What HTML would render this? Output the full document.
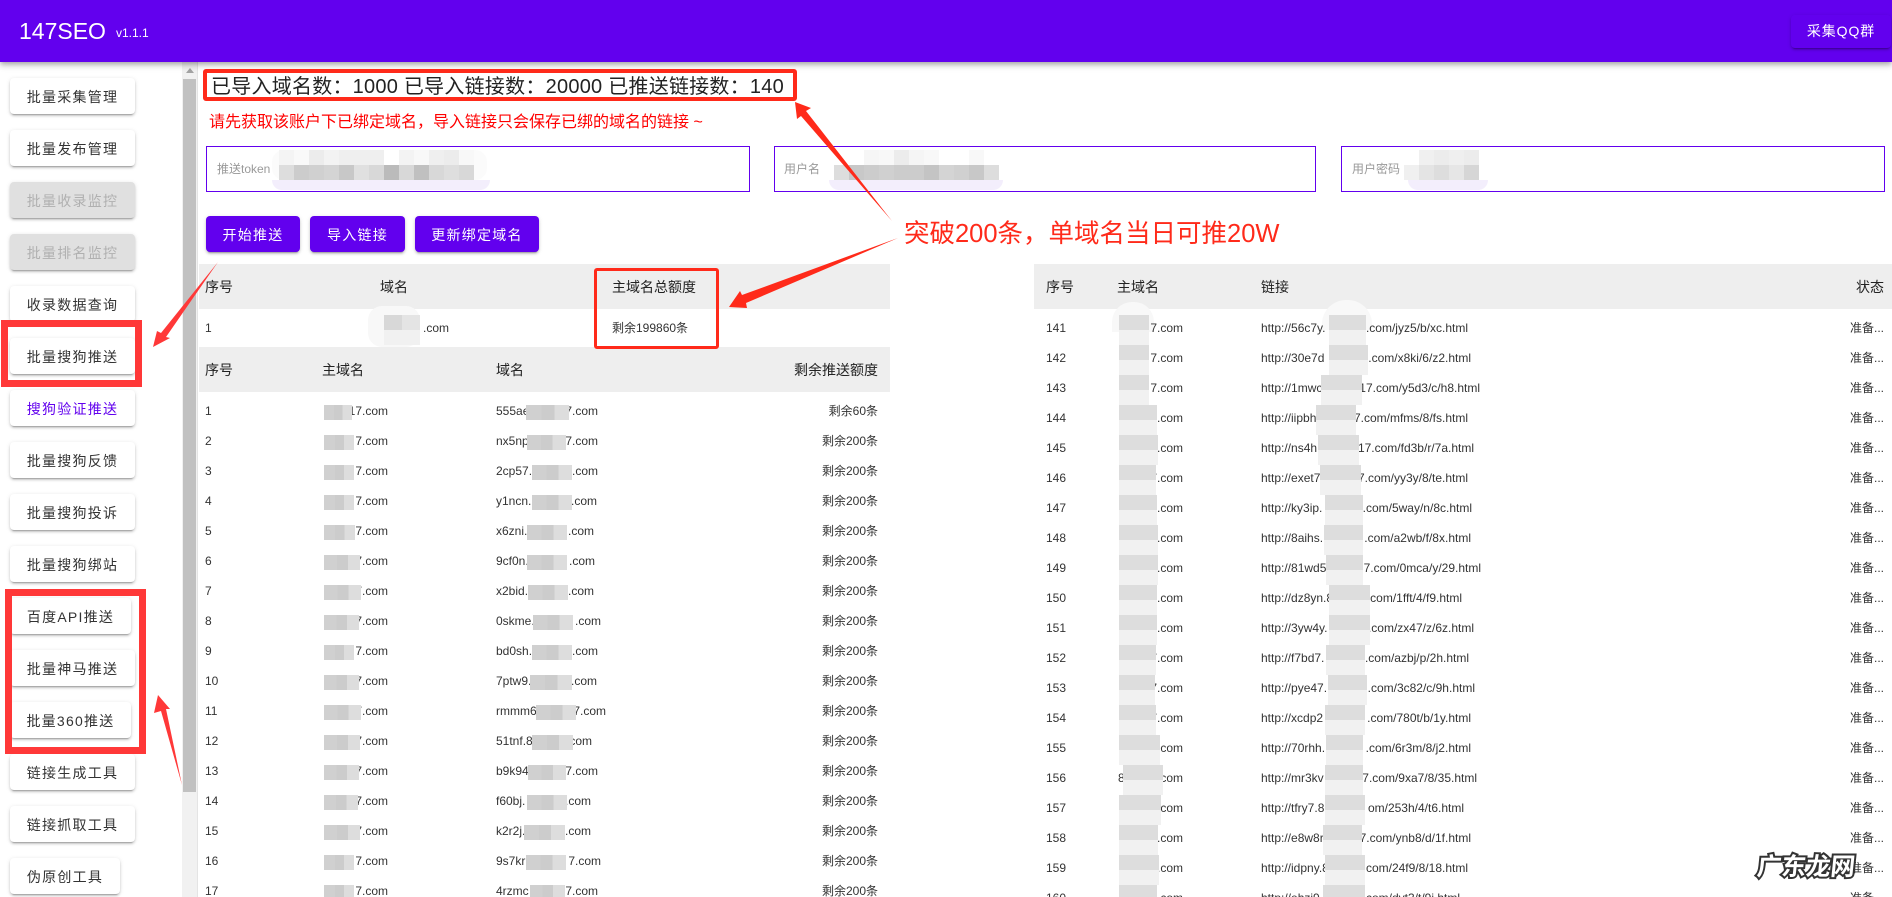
<!DOCTYPE html>
<html lang="zh-CN">
<head>
<meta charset="utf-8">
<title>147SEO</title>
<style>
html,body{margin:0;padding:0;background:#fff;width:1892px;height:897px;overflow:hidden}
body{position:relative;font-family:"Liberation Sans","Noto Sans CJK SC",sans-serif;color:#333}
.abs{position:absolute}
#top{position:absolute;left:0;top:0;width:1892px;height:62px;background:#6200ee;box-shadow:0 2px 4px -1px rgba(0,0,0,.2),0 4px 5px 0 rgba(0,0,0,.14),0 1px 10px 0 rgba(0,0,0,.12);z-index:5;color:#fff}
#top .t{position:absolute;left:19px;top:16px;font-size:23px;line-height:30px;white-space:nowrap}
#top .v{position:absolute;left:116px;top:25px;font-size:12px;line-height:16px}
#top .q{position:absolute;left:1791px;top:15px;width:100px;height:33px;line-height:33px;text-align:center;font-size:14px;letter-spacing:.9px;box-shadow:0 3px 1px -2px rgba(0,0,0,.2),0 2px 2px 0 rgba(0,0,0,.14),0 1px 5px 0 rgba(0,0,0,.12);border-radius:4px}
.sb{position:absolute;left:10px;width:125px;height:36px;line-height:38px;background:#fff;border-radius:4px;text-align:center;font-size:14px;letter-spacing:1.25px;color:#333;white-space:nowrap;box-shadow:0 3px 1px -2px rgba(0,0,0,.2),0 2px 2px 0 rgba(0,0,0,.14),0 1px 5px 0 rgba(0,0,0,.12)}
.sb.dis{background:#e0e0e0;color:#b0b0b0}
.sb.pur{color:#6200ee}
.pb{position:absolute;top:216px;height:36px;line-height:38px;background:#6200ee;color:#fff;border-radius:4px;text-align:center;font-size:14px;letter-spacing:1.25px;box-shadow:0 3px 1px -2px rgba(0,0,0,.2),0 2px 2px 0 rgba(0,0,0,.14),0 1px 5px 0 rgba(0,0,0,.12)}
.inp{position:absolute;top:146px;height:44px;border:1px solid #6200ee;background:#fff}
.lab{position:absolute;top:160px;font-size:12px;line-height:18px;color:#999;white-space:nowrap}
.mos{position:absolute;display:flex}
.mos i{display:block;width:15px;height:15px;flex:none}
.lav{position:absolute;top:180px;height:10px;background:#f3eefc;border-radius:0 0 10px 10px}
.hd{position:absolute;height:45px;background:#eee}
.th{position:absolute;font-size:14px;line-height:47px;color:#222;white-space:nowrap}
.row{position:absolute;left:0;width:1892px;height:30px;line-height:30px;font-size:12px;color:#333}
.row span{position:absolute;top:0;white-space:nowrap}
.a{left:205px}.b{right:1504px}.c{left:496px}.z{right:1014px}
.n{left:1046px}.p{right:709px}.h{left:1261px}.s{right:8px}
.m{position:absolute;top:9px;height:15px;background:linear-gradient(90deg,#d0d0d0 0 36%,#ccc 36% 66%,#ddd 66%)}
.d{position:absolute;top:2px;height:30px;background:linear-gradient(180deg,#ddd 0 50%,#f1f1f1 50%)}
.box{position:absolute;box-sizing:border-box}
</style>
</head>
<body>
<div id="top">
  <div class="t">147SEO</div><div class="v">v1.1.1</div>
  <div class="q">采集QQ群</div>
</div>

<!-- sidebar -->
<div class="sb" style="top:78px">批量采集管理</div>
<div class="sb" style="top:130px">批量发布管理</div>
<div class="sb dis" style="top:182px">批量收录监控</div>
<div class="sb dis" style="top:234px">批量排名监控</div>
<div class="sb" style="top:286px">收录数据查询</div>
<div class="sb" style="top:338px">批量搜狗推送</div>
<div class="sb pur" style="top:390px">搜狗验证推送</div>
<div class="sb" style="top:442px">批量搜狗反馈</div>
<div class="sb" style="top:494px">批量搜狗投诉</div>
<div class="sb" style="top:546px">批量搜狗绑站</div>
<div class="sb" style="top:598px;width:121px">百度API推送</div>
<div class="sb" style="top:650px">批量神马推送</div>
<div class="sb" style="top:702px;width:121px">批量360推送</div>
<div class="sb" style="top:754px">链接生成工具</div>
<div class="sb" style="top:806px">链接抓取工具</div>
<div class="sb" style="top:858px;width:110px">伪原创工具</div>

<!-- scrollbar -->
<div class="abs" style="left:182px;top:62px;width:16px;height:835px;background:#f1f1f1;border-right:1px solid #e4e4e4;box-sizing:border-box"></div>
<div class="abs" style="left:183px;top:79px;width:13px;height:713px;background:#c1c1c1"></div>
<div class="abs" style="left:186px;top:68px;width:0;height:0;border-left:4px solid transparent;border-right:4px solid transparent;border-bottom:5px solid #a3a3a3"></div>

<!-- stats -->
<div class="abs" style="left:211px;top:73px;font-size:20px;line-height:28px;letter-spacing:.24px;color:#222;white-space:nowrap">已导入域名数：1000 已导入链接数：20000 已推送链接数：140</div>
<div class="abs" style="left:209px;top:112px;font-size:16px;line-height:22px;color:#f00;white-space:nowrap">请先获取该账户下已绑定域名，导入链接只会保存已绑的域名的链接 ~</div>

<!-- inputs -->
<div class="inp" style="left:206px;width:542px"></div>
<div class="inp" style="left:774px;width:540px"></div>
<div class="inp" style="left:1341px;width:542px"></div>
<div class="lab" style="left:217px">推送token</div>
<div class="lab" style="left:784px">用户名</div>
<div class="lab" style="left:1352px">用户密码</div>

<div class="abs" style="left:272px;top:150px;width:215px;height:30px;background:#fbfbfb;border-radius:12px"></div>
<div class="lav" style="left:272px;width:218px"></div>
<div class="mos" style="left:279px;top:150px"><i style="background:#f4f4f4"></i><i style="background:#f9f9f9"></i><i style="background:#ececec"></i><i style="background:#f3f3f3"></i><i style="background:#efefef"></i><i style="background:#efefef"></i><i style="background:#efefef"></i><i style="background:#fff"></i><i style="background:#f3f3f3"></i><i style="background:#f8f8f8"></i><i style="background:#efefef"></i><i style="background:#ececec"></i><i style="background:#f8f8f8"></i></div>
<div class="mos" style="left:279px;top:165px"><i style="background:#ddd"></i><i style="background:#ccc"></i><i style="background:#d0d0d0"></i><i style="background:#d4d4d4"></i><i style="background:#c8c8c8"></i><i style="background:#e0e0e0"></i><i style="background:#d8d8d8"></i><i style="background:#bbb"></i><i style="background:#d8d8d8"></i><i style="background:#c0c0c0"></i><i style="background:#d8d8d8"></i><i style="background:#dedede"></i><i style="background:#d8d8d8"></i></div>

<div class="lav" style="left:829px;width:174px"></div>
<div class="mos" style="left:834px;top:150px"><i></i><i></i><i style="background:#f6f6f6"></i><i style="background:#f8f8f8"></i><i style="background:#ececec"></i><i style="background:#f5f5f5"></i><i style="background:#f8f8f8"></i><i></i><i></i><i style="background:#f8f8f8"></i><i></i></div>
<div class="mos" style="left:834px;top:165px"><i style="background:#ddd"></i><i style="background:#c8c8c8"></i><i style="background:#ccc"></i><i style="background:#d0d0d0"></i><i style="background:#ccc"></i><i style="background:#ccc"></i><i style="background:#c4c4c4"></i><i style="background:#d4d4d4"></i><i style="background:#d0d0d0"></i><i style="background:#c8c8c8"></i><i style="background:#ddd"></i></div>

<div class="lav" style="left:1408px;width:80px"></div>
<div class="mos" style="left:1404px;top:150px"><i></i><i style="background:#f0f0f0"></i><i style="background:#ececec"></i><i style="background:#efefef"></i><i style="background:#ececec"></i></div>
<div class="mos" style="left:1404px;top:165px"><i style="background:#f0f0f0"></i><i style="background:#e4e4e4"></i><i style="background:#ddd"></i><i style="background:#e6e6e6"></i><i style="background:#d6d6d6"></i></div>

<!-- push buttons -->
<div class="pb" style="left:206px;width:94px">开始推送</div>
<div class="pb" style="left:310px;width:95px">导入链接</div>
<div class="pb" style="left:415px;width:124px">更新绑定域名</div>

<!-- table 1 -->
<div class="hd" style="left:199px;top:264px;width:691px"></div>
<div class="th" style="left:205px;top:264px">序号</div>
<div class="th" style="left:380px;top:264px">域名</div>
<div class="th" style="left:612px;top:264px">主域名总额度</div>
<div class="row" style="top:313px">
  <span class="a">1</span><span style="left:423px">.com</span><span style="left:612px">剩余199860条</span>
</div>
<div class="abs" style="left:368px;top:306px;width:52px;height:41px;background:#f8f8f8;border-radius:14px"></div>
<div class="abs" style="left:384px;top:315px;width:36px;height:15px;background:linear-gradient(90deg,#d8d8d8 50%,#e4e4e4 50%)"></div>
<div class="abs" style="left:384px;top:330px;width:36px;height:15px;background:#f1f1f1"></div>

<!-- table 2 -->
<div class="hd" style="left:199px;top:347px;width:691px"></div>
<div class="th" style="left:205px;top:347px">序号</div>
<div class="th" style="left:322px;top:347px">主域名</div>
<div class="th" style="left:496px;top:347px">域名</div>
<div class="th" style="right:1014px;top:347px">剩余推送额度</div>

<div class="row" style="top:396px"><span class="a">1</span><span class="b">17.com</span><span class="c">555ae</span><span style="right:1294px">7.com</span><span class="z">剩余60条</span><div class="m" style="left:324px;width:28px"></div><div class="m" style="left:526px;width:43px"></div></div>
<div class="row" style="top:426px"><span class="a">2</span><span class="b">7.com</span><span class="c">nx5np</span><span style="right:1294px">7.com</span><span class="z">剩余200条</span><div class="m" style="left:324px;width:30px"></div><div class="m" style="left:527px;width:39px"></div></div>
<div class="row" style="top:456px"><span class="a">3</span><span class="b">7.com</span><span class="c">2cp57.</span><span style="right:1294px">.com</span><span class="z">剩余200条</span><div class="m" style="left:324px;width:30px"></div><div class="m" style="left:532px;width:40px"></div></div>
<div class="row" style="top:486px"><span class="a">4</span><span class="b">7.com</span><span class="c">y1ncn.</span><span style="right:1295px">.com</span><span class="z">剩余200条</span><div class="m" style="left:324px;width:30px"></div><div class="m" style="left:532px;width:40px"></div></div>
<div class="row" style="top:516px"><span class="a">5</span><span class="b">7.com</span><span class="c">x6zni.</span><span style="right:1298px">.com</span><span class="z">剩余200条</span><div class="m" style="left:324px;width:31px"></div><div class="m" style="left:527px;width:40px"></div></div>
<div class="row" style="top:546px"><span class="a">6</span><span class="b">7.com</span><span class="c">9cf0n.</span><span style="right:1297px">.com</span><span class="z">剩余200条</span><div class="m" style="left:324px;width:36px"></div><div class="m" style="left:527px;width:40px"></div></div>
<div class="row" style="top:576px"><span class="a">7</span><span class="b">7.com</span><span class="c">x2bid.</span><span style="right:1298px">.com</span><span class="z">剩余200条</span><div class="m" style="left:324px;width:37px"></div><div class="m" style="left:528px;width:40px"></div></div>
<div class="row" style="top:606px"><span class="a">8</span><span class="b">7.com</span><span class="c">0skme.</span><span style="right:1291px">.com</span><span class="z">剩余200条</span><div class="m" style="left:324px;width:35px"></div><div class="m" style="left:533px;width:40px"></div></div>
<div class="row" style="top:636px"><span class="a">9</span><span class="b">7.com</span><span class="c">bd0sh.</span><span style="right:1294px">.com</span><span class="z">剩余200条</span><div class="m" style="left:324px;width:30px"></div><div class="m" style="left:532px;width:40px"></div></div>
<div class="row" style="top:666px"><span class="a">10</span><span class="b">7.com</span><span class="c">7ptw9.</span><span style="right:1295px">.com</span><span class="z">剩余200条</span><div class="m" style="left:324px;width:35px"></div><div class="m" style="left:530px;width:42px"></div></div>
<div class="row" style="top:696px"><span class="a">11</span><span class="b">7.com</span><span class="c">rmmm6</span><span style="right:1286px">7.com</span><span class="z">剩余200条</span><div class="m" style="left:324px;width:37px"></div><div class="m" style="left:536px;width:40px"></div></div>
<div class="row" style="top:726px"><span class="a">12</span><span class="b">7.com</span><span class="c">51tnf.8</span><span style="right:1300px">.com</span><span class="z">剩余200条</span><div class="m" style="left:324px;width:36px"></div><div class="m" style="left:532px;width:41px"></div></div>
<div class="row" style="top:756px"><span class="a">13</span><span class="b">7.com</span><span class="c">b9k94</span><span style="right:1294px">7.com</span><span class="z">剩余200条</span><div class="m" style="left:324px;width:35px"></div><div class="m" style="left:528px;width:38px"></div></div>
<div class="row" style="top:786px"><span class="a">14</span><span class="b">7.com</span><span class="c">f60bj.</span><span style="right:1301px">.com</span><span class="z">剩余200条</span><div class="m" style="left:324px;width:34px"></div><div class="m" style="left:527px;width:40px"></div></div>
<div class="row" style="top:816px"><span class="a">15</span><span class="b">7.com</span><span class="c">k2r2j.</span><span style="right:1301px">.com</span><span class="z">剩余200条</span><div class="m" style="left:324px;width:36px"></div><div class="m" style="left:524px;width:41px"></div></div>
<div class="row" style="top:846px"><span class="a">16</span><span class="b">7.com</span><span class="c">9s7kr</span><span style="right:1291px">7.com</span><span class="z">剩余200条</span><div class="m" style="left:324px;width:30px"></div><div class="m" style="left:526px;width:40px"></div></div>
<div class="row" style="top:876px"><span class="a">17</span><span class="b">7.com</span><span class="c">4rzmc</span><span style="right:1294px">7.com</span><span class="z">剩余200条</span><div class="m" style="left:324px;width:30px"></div><div class="m" style="left:530px;width:35px"></div></div>

<!-- right table -->
<div class="hd" style="left:1034px;top:264px;width:858px"></div>
<div class="th" style="left:1046px;top:264px">序号</div>
<div class="th" style="left:1117px;top:264px">主域名</div>
<div class="th" style="left:1261px;top:264px">链接</div>
<div class="th" style="right:8px;top:264px">状态</div>
<div class="abs" style="left:1112px;top:302px;width:42px;height:30px;background:#f8f8f8;border-radius:20px 20px 0 0"></div>
<div class="abs" style="left:1322px;top:300px;width:50px;height:30px;background:#f8f8f8;border-radius:24px 24px 0 0"></div>

<div class="row" style="top:313px"><span class="n">141</span><span class="p">7.com</span><span class="h">http://56c7y.</span><span style="right:424px">.com/jyz5/b/xc.html</span><span class="s">准备...</span><div class="d" style="left:1119px;width:30px"></div><div class="d" style="left:1329px;width:37px"></div></div>
<div class="row" style="top:343px"><span class="n">142</span><span class="p">7.com</span><span class="h">http://30e7d</span><span style="right:421px">.com/x8ki/6/z2.html</span><span class="s">准备...</span><div class="d" style="left:1119px;width:30px"></div><div class="d" style="left:1329px;width:39px"></div></div>
<div class="row" style="top:373px"><span class="n">143</span><span class="p">7.com</span><span class="h">http://1mwc</span><span style="right:412px">17.com/y5d3/c/h8.html</span><span class="s">准备...</span><div class="d" style="left:1119px;width:30px"></div><div class="d" style="left:1321px;width:41px"></div></div>
<div class="row" style="top:403px"><span class="n">144</span><span class="p">7.com</span><span class="h">http://iipbh</span><span style="right:424px">7.com/mfms/8/fs.html</span><span class="s">准备...</span><div class="d" style="left:1119px;width:38px"></div><div class="d" style="left:1316px;width:40px"></div></div>
<div class="row" style="top:433px"><span class="n">145</span><span class="p">7.com</span><span class="h">http://ns4h</span><span style="right:418px">17.com/fd3b/r/7a.html</span><span class="s">准备...</span><div class="d" style="left:1119px;width:39px"></div><div class="d" style="left:1318px;width:41px"></div></div>
<div class="row" style="top:463px"><span class="n">146</span><span class="p">7.com</span><span class="h">http://exet7</span><span style="right:424px">7.com/yy3y/8/te.html</span><span class="s">准备...</span><div class="d" style="left:1119px;width:37px"></div><div class="d" style="left:1320px;width:41px"></div></div>
<div class="row" style="top:493px"><span class="n">147</span><span class="p">7.com</span><span class="h">http://ky3ip.</span><span style="right:420px">.com/5way/n/8c.html</span><span class="s">准备...</span><div class="d" style="left:1119px;width:38px"></div><div class="d" style="left:1325px;width:38px"></div></div>
<div class="row" style="top:523px"><span class="n">148</span><span class="p">7.com</span><span class="h">http://8aihs.</span><span style="right:421px">.com/a2wb/f/8x.html</span><span class="s">准备...</span><div class="d" style="left:1119px;width:39px"></div><div class="d" style="left:1324px;width:39px"></div></div>
<div class="row" style="top:553px"><span class="n">149</span><span class="p">7.com</span><span class="h">http://81wd5</span><span style="right:411px">7.com/0mca/y/29.html</span><span class="s">准备...</span><div class="d" style="left:1119px;width:39px"></div><div class="d" style="left:1326px;width:37px"></div></div>
<div class="row" style="top:583px"><span class="n">150</span><span class="p">7.com</span><span class="h">http://dz8yn.8</span><span style="right:430px">.com/1fft/4/f9.html</span><span class="s">准备...</span><div class="d" style="left:1119px;width:38px"></div><div class="d" style="left:1329px;width:41px"></div></div>
<div class="row" style="top:613px"><span class="n">151</span><span class="p">7.com</span><span class="h">http://3yw4y.</span><span style="right:418px">.com/zx47/z/6z.html</span><span class="s">准备...</span><div class="d" style="left:1119px;width:38px"></div><div class="d" style="left:1329px;width:41px"></div></div>
<div class="row" style="top:643px"><span class="n">152</span><span class="p">7.com</span><span class="h">http://f7bd7.</span><span style="right:423px">.com/azbj/p/2h.html</span><span class="s">准备...</span><div class="d" style="left:1119px;width:37px"></div><div class="d" style="left:1326px;width:39px"></div></div>
<div class="row" style="top:673px"><span class="n">153</span><span class="p">7.com</span><span class="h">http://pye47.</span><span style="right:417px">.com/3c82/c/9h.html</span><span class="s">准备...</span><div class="d" style="left:1119px;width:36px"></div><div class="d" style="left:1328px;width:39px"></div></div>
<div class="row" style="top:703px"><span class="n">154</span><span class="p">7.com</span><span class="h">http://xcdp2</span><span style="right:421px">.com/780t/b/1y.html</span><span class="s">准备...</span><div class="d" style="left:1119px;width:37px"></div><div class="d" style="left:1325px;width:40px"></div></div>
<div class="row" style="top:733px"><span class="n">155</span><span class="p">7.com</span><span class="h">http://70rhh.</span><span style="right:421px">.com/6r3m/8/j2.html</span><span class="s">准备...</span><div class="d" style="left:1119px;width:41px"></div><div class="d" style="left:1326px;width:37px"></div></div>
<div class="row" style="top:763px"><span class="n">156</span><span style="left:1118px">8</span><span class="p">7.com</span><span class="h">http://mr3kv</span><span style="right:415px">7.com/9xa7/8/35.html</span><span class="s">准备...</span><div class="d" style="left:1123px;width:40px"></div><div class="d" style="left:1325px;width:38px"></div></div>
<div class="row" style="top:793px"><span class="n">157</span><span class="p">7.com</span><span class="h">http://tfry7.8</span><span style="right:428px">om/253h/4/t6.html</span><span class="s">准备...</span><div class="d" style="left:1119px;width:42px"></div><div class="d" style="left:1325px;width:40px"></div></div>
<div class="row" style="top:823px"><span class="n">158</span><span class="p">7.com</span><span class="h">http://e8w8r</span><span style="right:421px">7.com/ynb8/d/1f.html</span><span class="s">准备...</span><div class="d" style="left:1119px;width:39px"></div><div class="d" style="left:1323px;width:39px"></div></div>
<div class="row" style="top:853px"><span class="n">159</span><span class="p">7.com</span><span class="h">http://idpny.8</span><span style="right:424px">.com/24f9/8/18.html</span><span class="s">准备...</span><div class="d" style="left:1119px;width:40px"></div><div class="d" style="left:1325px;width:40px"></div></div>
<div class="row" style="top:883px"><span class="n">160</span><span class="p">7.com</span><span class="h">http://ehzi9</span><span style="right:432px">.com/dvt3/t/9j.html</span><span class="s">准备...</span><div class="d" style="left:1119px;width:38px"></div><div class="d" style="left:1323px;width:42px"></div></div>

<!-- annotations -->
<div class="box" style="left:203px;top:69px;width:594px;height:32px;border:4px solid #ff2a1a;border-radius:3px;z-index:6"></div>
<div class="box" style="left:594px;top:268px;width:125px;height:81px;border:3px solid #ff2a1a;border-radius:3px;z-index:6"></div>
<div class="box" style="left:1px;top:320px;width:141px;height:67px;border:7px solid #ff3838;z-index:6"></div>
<div class="box" style="left:5px;top:589px;width:141px;height:165px;border:7px solid #ff3838;z-index:6"></div>

<svg class="abs" style="left:0;top:0;z-index:7" width="1892" height="897" viewBox="0 0 1892 897">
  <polygon fill="#ff2a1a" points="795,102 811,108 806,111 892,221 801,116 797,119"/>
  <polygon fill="#ff2a1a" points="898,238 746,303 747,308 729,307 740,291 742,295"/>
  <polygon fill="#ff3838" points="218,262 166,337 170,338 153,347 157,331 161,333"/>
  <polygon fill="#ff3838" points="182,785 166,709 170,709 158,695 154,713 161,711"/>
</svg>

<div class="abs" style="left:904px;top:216px;font-size:25.5px;line-height:36px;color:#ff2a1a;white-space:nowrap;z-index:7">突破200条，单域名当日可推20W</div>

<div class="abs" style="left:1757px;top:853px;width:100px;font-size:24.5px;line-height:30px;font-weight:700;color:#fff;-webkit-text-stroke:4px #333;paint-order:stroke fill;white-space:nowrap;transform:skewX(-6deg);z-index:8">广东龙网</div>
</body>
</html>
